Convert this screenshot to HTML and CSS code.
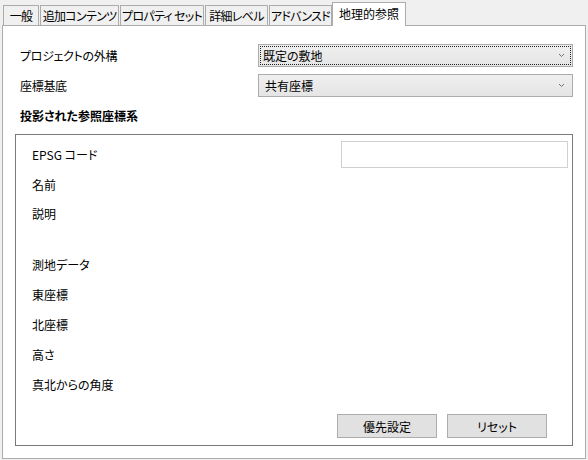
FILE: index.html
```html
<!DOCTYPE html>
<html lang="ja">
<head>
<meta charset="utf-8">
<link rel="stylesheet" href="styles.css">
</head>
<body>
<div class="tabs">
  <div class="tab t1">一般</div>
  <div class="tab t2">追加コンテンツ</div>
  <div class="tab t3">プロパティ セット</div>
  <div class="tab t4">詳細レベル</div>
  <div class="tab t5">アドバンスド</div>
  <div class="tab active">地理的参照</div>
</div>
<div class="panel">
  <div class="row">
    <span class="label">プロジェクトの外構</span>
    <div class="select focused"><span class="focus-ring"><span class="val">既定の敷地</span><svg class="chev" width="7" height="5" viewBox="0 0 7 5"><path d="M1 1 L3.5 3.5 L6 1" fill="none" stroke="#707070" stroke-width="1"/></svg></span></div>
  </div>
  <div class="row">
    <span class="label">座標基底</span>
    <div class="select"><span class="focus-ring plain"><span class="val">共有座標</span><svg class="chev" width="7" height="5" viewBox="0 0 7 5"><path d="M1 1 L3.5 3.5 L6 1" fill="none" stroke="#707070" stroke-width="1"/></svg></span></div>
  </div>
  <div class="section-title">投影された参照座標系</div>
  <div class="group">
    <div class="grow"><span class="glabel">EPSG コード</span><div class="input"></div></div>
    <div class="grow"><span class="glabel">名前</span></div>
    <div class="grow tall"><span class="glabel">説明</span></div>
    <div class="grow"><span class="glabel">測地データ</span></div>
    <div class="grow"><span class="glabel">東座標</span></div>
    <div class="grow"><span class="glabel">北座標</span></div>
    <div class="grow"><span class="glabel">高さ</span></div>
    <div class="grow"><span class="glabel">真北からの角度</span></div>
    <div class="buttons">
      <div class="btn">優先設定</div>
      <div class="btn">リセット</div>
    </div>
  </div>
</div>
</body>
</html>
```

FILE: styles.css
```css
* { box-sizing: border-box; }
html, body {
  margin: 0;
  padding: 0;
  width: 588px;
  height: 460px;
  background: #f0f0f0;
  font-family: "Noto Sans CJK JP", "Noto Sans", sans-serif;
  font-size: 12px;
  font-feature-settings: "palt";
  color: #000;
  overflow: hidden;
}
.tabs {
  display: flex;
  align-items: flex-end;
  height: 25px;
  padding-left: 3px;
  position: relative;
  z-index: 2;
}
.tab {
  height: 20px;
  border: 1px solid #acacac;
  border-bottom: none;
  background: #f0f0f0;
  display: flex;
  align-items: center;
  justify-content: center;
  white-space: nowrap;
  line-height: 18px;
  letter-spacing: -0.7px;
  margin-right: 1px;
}
.t1 { width: 36px; }
.t2 { width: 79px; }
.t3 { width: 84px; }
.t4 { width: 63px; }
.t5 { width: 63px; margin-right: 0; }
.tab.active {
  width: 74px;
  height: 24px;
  margin-bottom: -1px;
  margin-right: 0;
  background: #fff;
  padding-bottom: 1px;
  letter-spacing: 0;
}
.panel {
  margin-left: 2px;
  width: 584px;
  height: 434px;
  border: 1px solid #acacac;
  background: #fff;
  display: flex;
  flex-direction: column;
  padding: 18px 12px 12px 12px;
  position: relative;
  z-index: 1;
}
.row {
  display: flex;
  align-items: center;
  height: 23px;
  padding-left: 5px;
  margin-bottom: 7px;
}
.label { flex: 1; letter-spacing: -0.3px; }
.select {
  width: 315px;
  height: 23px;
  border: 1px solid #acacac;
  background: linear-gradient(#efefef, #e5e5e5);
  padding: 1px;
}
.focus-ring {
  display: flex;
  align-items: center;
  height: 100%;
  border: 1px dotted #222;
  padding-left: 2px;
  padding-right: 5px;
}
.focus-ring.plain { border-color: transparent; padding-left: 4px; }
.val { flex: 1; }
.chev { display: block; }
.section-title {
  font-weight: bold;
  line-height: 16px;
  padding-left: 5px;
  margin-top: 4px;
  margin-bottom: 10px;
}
.group {
  flex: 1;
  border: 1px solid #7a7a7a;
  display: flex;
  flex-direction: column;
  padding: 4px 4px 7px 16px;
}
.grow {
  display: flex;
  align-items: center;
  height: 30px;
}
.grow.tall {
  height: 50px;
  align-items: flex-start;
  line-height: 30px;
}
.glabel { flex: 1; }
.input {
  width: 227px;
  height: 27px;
  border: 1px solid #d0d0d0;
  background: #fff;
}
.buttons {
  margin-top: auto;
  display: flex;
  justify-content: flex-end;
  gap: 10px;
  padding-right: 21px;
}
.btn {
  width: 100px;
  height: 24px;
  border: 1px solid #adadad;
  background: #e1e1e1;
  display: flex;
  align-items: center;
  justify-content: center;
}
```
